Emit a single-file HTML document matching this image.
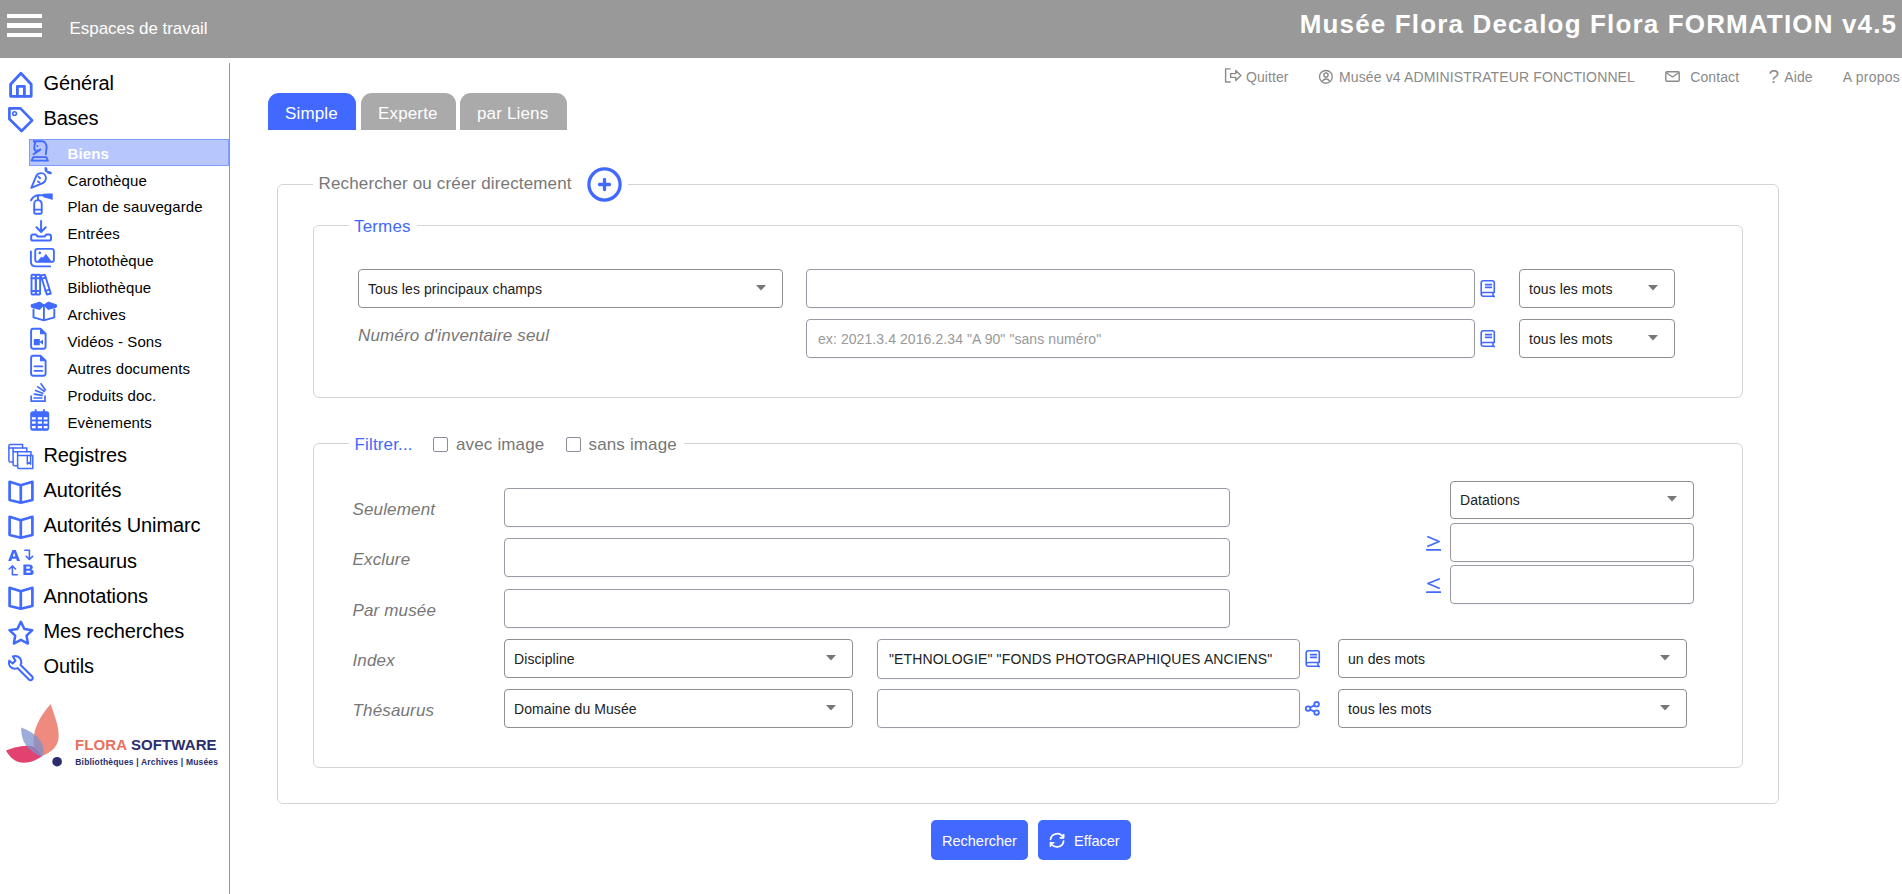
<!DOCTYPE html>
<html><head><meta charset="utf-8"><style>
html,body{margin:0;padding:0;width:1902px;height:894px;overflow:hidden;background:#fff;font-family:"Liberation Sans", sans-serif;}
.t{position:absolute;white-space:nowrap;}
</style></head><body>
<div style="position:absolute;left:0px;top:0px;width:1902px;height:58px;background:#999999;"></div><div style="position:absolute;left:7px;top:13.5px;width:35px;height:4.5px;background:#fff;"></div><div style="position:absolute;left:7px;top:23px;width:35px;height:4.5px;background:#fff;"></div><div style="position:absolute;left:7px;top:32.7px;width:35px;height:4.5px;background:#fff;"></div><div class="t" style="left:69.5px;top:20.00px;font-size:17px;line-height:17px;color:#fff;font-weight:normal;font-style:normal;letter-spacing:-0.05px;">Espaces de travail</div><div class="t" style="right:4.85px;top:10.60px;font-size:26px;line-height:26px;color:#fff;font-weight:bold;font-style:normal;white-space:nowrap;letter-spacing:1.15px;">Musée Flora Decalog Flora FORMATION v4.5</div><div style="position:absolute;left:229px;top:63px;width:1px;height:831px;background:#999;"></div><div class="t" style="left:43.5px;top:73.00px;font-size:20px;line-height:20px;color:#000;font-weight:normal;font-style:normal;letter-spacing:-0.12px;">Général</div><div class="t" style="left:43.5px;top:108.00px;font-size:20px;line-height:20px;color:#000;font-weight:normal;font-style:normal;letter-spacing:-0.12px;">Bases</div><div class="t" style="left:43.5px;top:445.00px;font-size:20px;line-height:20px;color:#000;font-weight:normal;font-style:normal;letter-spacing:-0.12px;">Registres</div><div class="t" style="left:43.5px;top:480.00px;font-size:20px;line-height:20px;color:#000;font-weight:normal;font-style:normal;letter-spacing:-0.12px;">Autorités</div><div class="t" style="left:43.5px;top:515.00px;font-size:20px;line-height:20px;color:#000;font-weight:normal;font-style:normal;letter-spacing:-0.12px;">Autorités Unimarc</div><div class="t" style="left:43.5px;top:551.00px;font-size:20px;line-height:20px;color:#000;font-weight:normal;font-style:normal;letter-spacing:-0.12px;">Thesaurus</div><div class="t" style="left:43.5px;top:586.00px;font-size:20px;line-height:20px;color:#000;font-weight:normal;font-style:normal;letter-spacing:-0.12px;">Annotations</div><div class="t" style="left:43.5px;top:621.00px;font-size:20px;line-height:20px;color:#000;font-weight:normal;font-style:normal;letter-spacing:-0.12px;">Mes recherches</div><div class="t" style="left:43.5px;top:655.50px;font-size:20px;line-height:20px;color:#000;font-weight:normal;font-style:normal;letter-spacing:-0.12px;">Outils</div><div style="position:absolute;left:29px;top:139px;width:200px;height:27px;background:#b7c7fd;box-sizing:border-box;border:1px solid #7f9cff;"></div><div class="t" style="left:67.5px;top:145.60px;font-size:15px;line-height:15px;color:#fff;font-weight:bold;font-style:normal;letter-spacing:0.1px;">Biens</div><div class="t" style="left:67.5px;top:172.51px;font-size:15px;line-height:15px;color:#000;font-weight:normal;font-style:normal;letter-spacing:0.1px;">Carothèque</div><div class="t" style="left:67.5px;top:199.42px;font-size:15px;line-height:15px;color:#000;font-weight:normal;font-style:normal;letter-spacing:0.1px;">Plan de sauvegarde</div><div class="t" style="left:67.5px;top:226.33px;font-size:15px;line-height:15px;color:#000;font-weight:normal;font-style:normal;letter-spacing:0.1px;">Entrées</div><div class="t" style="left:67.5px;top:253.24px;font-size:15px;line-height:15px;color:#000;font-weight:normal;font-style:normal;letter-spacing:0.1px;">Photothèque</div><div class="t" style="left:67.5px;top:280.15px;font-size:15px;line-height:15px;color:#000;font-weight:normal;font-style:normal;letter-spacing:0.1px;">Bibliothèque</div><div class="t" style="left:67.5px;top:307.06px;font-size:15px;line-height:15px;color:#000;font-weight:normal;font-style:normal;letter-spacing:0.1px;">Archives</div><div class="t" style="left:67.5px;top:333.97px;font-size:15px;line-height:15px;color:#000;font-weight:normal;font-style:normal;letter-spacing:0.1px;">Vidéos - Sons</div><div class="t" style="left:67.5px;top:360.88px;font-size:15px;line-height:15px;color:#000;font-weight:normal;font-style:normal;letter-spacing:0.1px;">Autres documents</div><div class="t" style="left:67.5px;top:387.79px;font-size:15px;line-height:15px;color:#000;font-weight:normal;font-style:normal;letter-spacing:0.1px;">Produits doc.</div><div class="t" style="left:67.5px;top:414.70px;font-size:15px;line-height:15px;color:#000;font-weight:normal;font-style:normal;letter-spacing:0.1px;">Evènements</div><div class="t" style="left:1246px;top:70.00px;font-size:14px;line-height:14px;color:#8a8a8a;font-weight:normal;font-style:normal;letter-spacing:0.08px;">Quitter</div><div class="t" style="left:1339px;top:70.00px;font-size:14px;line-height:14px;color:#8a8a8a;font-weight:normal;font-style:normal;letter-spacing:0.13px;">Musée v4 ADMINISTRATEUR FONCTIONNEL</div><div class="t" style="left:1690.3px;top:70.00px;font-size:14px;line-height:14px;color:#8a8a8a;font-weight:normal;font-style:normal;letter-spacing:0.08px;">Contact</div><div class="t" style="left:1768.5px;top:66.70px;font-size:19px;line-height:19px;color:#8a8a8a;font-weight:normal;font-style:normal;">?</div><div class="t" style="left:1784.3px;top:70.00px;font-size:14px;line-height:14px;color:#8a8a8a;font-weight:normal;font-style:normal;letter-spacing:0.08px;">Aide</div><div class="t" style="left:1842.8px;top:70.00px;font-size:14px;line-height:14px;color:#8a8a8a;font-weight:normal;font-style:normal;letter-spacing:0.25px;">A propos</div><div style="position:absolute;left:268px;top:93px;width:88px;height:37px;background:#4169ff;border-radius:11px 11px 0 0;"></div><div class="t" style="left:285px;top:105.20px;font-size:17px;line-height:17px;color:#fff;font-weight:normal;font-style:normal;letter-spacing:0.15px;">Simple</div><div style="position:absolute;left:361px;top:93px;width:95px;height:37px;background:#aaaaaa;border-radius:11px 11px 0 0;"></div><div class="t" style="left:378px;top:105.20px;font-size:17px;line-height:17px;color:#fff;font-weight:normal;font-style:normal;letter-spacing:0.15px;">Experte</div><div style="position:absolute;left:460px;top:93px;width:107px;height:37px;background:#aaaaaa;border-radius:11px 11px 0 0;"></div><div class="t" style="left:477px;top:105.20px;font-size:17px;line-height:17px;color:#fff;font-weight:normal;font-style:normal;letter-spacing:0.15px;">par Liens</div><div style="position:absolute;left:277px;top:184px;width:1502px;height:620px;box-sizing:border-box;border:1px solid #d4d4d4;border-radius:6px;"></div><div style="position:absolute;left:313px;top:183px;width:315px;height:3px;background:#fff;"></div><div style="position:absolute;left:313px;top:225px;width:1430px;height:173px;box-sizing:border-box;border:1px solid #d4d4d4;border-radius:6px;"></div><div style="position:absolute;left:349px;top:224px;width:68px;height:3px;background:#fff;"></div><div style="position:absolute;left:313px;top:443px;width:1430px;height:325px;box-sizing:border-box;border:1px solid #d4d4d4;border-radius:6px;"></div><div style="position:absolute;left:349px;top:442px;width:335px;height:3px;background:#fff;"></div><div class="t" style="left:318.5px;top:175.20px;font-size:17px;line-height:17px;color:#777;font-weight:normal;font-style:normal;letter-spacing:0.15px;">Rechercher ou créer directement</div><svg style="position:absolute;left:586px;top:166px;" width="37" height="37" viewBox="0 0 37 37"><circle cx="18.5" cy="18.5" r="15.6" fill="none" stroke="#4169ff" stroke-width="3.3"/><path d="M18.5 13.5v10M13.5 18.5h10" stroke="#4169ff" stroke-width="3.3" stroke-linecap="round"/></svg><div class="t" style="left:354px;top:218.00px;font-size:17px;line-height:17px;color:#4169ff;font-weight:normal;font-style:normal;letter-spacing:0.15px;">Termes</div><div class="t" style="left:354.5px;top:435.60px;font-size:17px;line-height:17px;color:#4169ff;font-weight:normal;font-style:normal;letter-spacing:0.15px;">Filtrer...</div><div style="position:absolute;left:433px;top:437px;width:15px;height:15px;box-sizing:border-box;border:1px solid #8c8c9a;border-radius:2px;background:#fff;"></div><div class="t" style="left:456px;top:435.60px;font-size:17px;line-height:17px;color:#777;font-weight:normal;font-style:normal;letter-spacing:0.15px;">avec image</div><div style="position:absolute;left:566px;top:437px;width:15px;height:15px;box-sizing:border-box;border:1px solid #8c8c9a;border-radius:2px;background:#fff;"></div><div class="t" style="left:588.5px;top:435.60px;font-size:17px;line-height:17px;color:#777;font-weight:normal;font-style:normal;letter-spacing:0.15px;">sans image</div><div style="position:absolute;left:358px;top:269px;width:425px;height:38.5px;box-sizing:border-box;border:1px solid #8f8f8f;border-radius:4px;background:#fff;"></div><div class="t" style="left:368px;top:281.55px;font-size:14px;line-height:14px;color:#222;font-weight:normal;font-style:normal;letter-spacing:0.08px;">Tous les principaux champs</div><svg style="position:absolute;left:756px;top:284.75px;" width="10" height="6" viewBox="0 0 10 6"><path d="M0 0h10L5 5.5z" fill="#777"/></svg><div style="position:absolute;left:806px;top:269px;width:669px;height:38.5px;box-sizing:border-box;border:1px solid #9a9aa6;border-radius:4px;background:#fff;box-shadow:0 1px 2px rgba(0,0,0,0.04);"></div><div style="position:absolute;left:806px;top:319px;width:669px;height:38.5px;box-sizing:border-box;border:1px solid #9a9aa6;border-radius:4px;background:#fff;box-shadow:0 1px 2px rgba(0,0,0,0.04);"></div><div class="t" style="left:818px;top:331.55px;font-size:14px;line-height:14px;color:#999;font-weight:normal;font-style:normal;letter-spacing:0.08px;">ex: 2021.3.4 2016.2.34 "A 90" "sans numéro"</div><div style="position:absolute;left:1519px;top:269px;width:156px;height:38.5px;box-sizing:border-box;border:1px solid #8f8f8f;border-radius:4px;background:#fff;"></div><div class="t" style="left:1529px;top:281.55px;font-size:14px;line-height:14px;color:#222;font-weight:normal;font-style:normal;letter-spacing:0.08px;">tous les mots</div><svg style="position:absolute;left:1648px;top:284.75px;" width="10" height="6" viewBox="0 0 10 6"><path d="M0 0h10L5 5.5z" fill="#777"/></svg><div style="position:absolute;left:1519px;top:319px;width:156px;height:38.5px;box-sizing:border-box;border:1px solid #8f8f8f;border-radius:4px;background:#fff;"></div><div class="t" style="left:1529px;top:331.55px;font-size:14px;line-height:14px;color:#222;font-weight:normal;font-style:normal;letter-spacing:0.08px;">tous les mots</div><svg style="position:absolute;left:1648px;top:334.75px;" width="10" height="6" viewBox="0 0 10 6"><path d="M0 0h10L5 5.5z" fill="#777"/></svg><div class="t" style="left:358px;top:326.80px;font-size:17px;line-height:17px;color:#777;font-weight:normal;font-style:italic;letter-spacing:0.15px;">Numéro d'inventaire seul</div><div class="t" style="left:352.5px;top:500.90px;font-size:17px;line-height:17px;color:#777;font-weight:normal;font-style:italic;letter-spacing:0.15px;">Seulement</div><div class="t" style="left:352.5px;top:551.00px;font-size:17px;line-height:17px;color:#777;font-weight:normal;font-style:italic;letter-spacing:0.15px;">Exclure</div><div class="t" style="left:352.5px;top:602.20px;font-size:17px;line-height:17px;color:#777;font-weight:normal;font-style:italic;letter-spacing:0.15px;">Par musée</div><div class="t" style="left:352.5px;top:651.80px;font-size:17px;line-height:17px;color:#777;font-weight:normal;font-style:italic;letter-spacing:0.15px;">Index</div><div class="t" style="left:352.5px;top:702.20px;font-size:17px;line-height:17px;color:#777;font-weight:normal;font-style:italic;letter-spacing:0.15px;">Thésaurus</div><div style="position:absolute;left:504px;top:488px;width:726px;height:38.5px;box-sizing:border-box;border:1px solid #9a9aa6;border-radius:4px;background:#fff;box-shadow:0 1px 2px rgba(0,0,0,0.04);"></div><div style="position:absolute;left:504px;top:538px;width:726px;height:38.5px;box-sizing:border-box;border:1px solid #9a9aa6;border-radius:4px;background:#fff;box-shadow:0 1px 2px rgba(0,0,0,0.04);"></div><div style="position:absolute;left:504px;top:589px;width:726px;height:38.5px;box-sizing:border-box;border:1px solid #9a9aa6;border-radius:4px;background:#fff;box-shadow:0 1px 2px rgba(0,0,0,0.04);"></div><div style="position:absolute;left:504px;top:639px;width:349px;height:38.5px;box-sizing:border-box;border:1px solid #8f8f8f;border-radius:4px;background:#fff;"></div><div class="t" style="left:514px;top:651.55px;font-size:14px;line-height:14px;color:#222;font-weight:normal;font-style:normal;letter-spacing:0.08px;">Discipline</div><svg style="position:absolute;left:826px;top:654.75px;" width="10" height="6" viewBox="0 0 10 6"><path d="M0 0h10L5 5.5z" fill="#777"/></svg><div style="position:absolute;left:504px;top:689px;width:349px;height:38.5px;box-sizing:border-box;border:1px solid #8f8f8f;border-radius:4px;background:#fff;"></div><div class="t" style="left:514px;top:701.55px;font-size:14px;line-height:14px;color:#222;font-weight:normal;font-style:normal;letter-spacing:0.08px;">Domaine du Musée</div><svg style="position:absolute;left:826px;top:704.75px;" width="10" height="6" viewBox="0 0 10 6"><path d="M0 0h10L5 5.5z" fill="#777"/></svg><div style="position:absolute;left:877px;top:639px;width:423px;height:39.5px;box-sizing:border-box;border:1px solid #9a9aa6;border-radius:4px;background:#fff;box-shadow:0 1px 2px rgba(0,0,0,0.04);"></div><div class="t" style="left:889px;top:652.05px;font-size:14px;line-height:14px;color:#222;font-weight:normal;font-style:normal;letter-spacing:0.15px;">"ETHNOLOGIE" "FONDS PHOTOGRAPHIQUES ANCIENS"</div><div style="position:absolute;left:877px;top:689px;width:423px;height:39px;box-sizing:border-box;border:1px solid #9a9aa6;border-radius:4px;background:#fff;box-shadow:0 1px 2px rgba(0,0,0,0.04);"></div><div style="position:absolute;left:1338px;top:639px;width:349px;height:38.5px;box-sizing:border-box;border:1px solid #8f8f8f;border-radius:4px;background:#fff;"></div><div class="t" style="left:1348px;top:651.55px;font-size:14px;line-height:14px;color:#222;font-weight:normal;font-style:normal;letter-spacing:0.08px;">un des mots</div><svg style="position:absolute;left:1660px;top:654.75px;" width="10" height="6" viewBox="0 0 10 6"><path d="M0 0h10L5 5.5z" fill="#777"/></svg><div style="position:absolute;left:1338px;top:689px;width:349px;height:38.5px;box-sizing:border-box;border:1px solid #8f8f8f;border-radius:4px;background:#fff;"></div><div class="t" style="left:1348px;top:701.55px;font-size:14px;line-height:14px;color:#222;font-weight:normal;font-style:normal;letter-spacing:0.08px;">tous les mots</div><svg style="position:absolute;left:1660px;top:704.75px;" width="10" height="6" viewBox="0 0 10 6"><path d="M0 0h10L5 5.5z" fill="#777"/></svg><div style="position:absolute;left:1450px;top:481px;width:244px;height:37.5px;box-sizing:border-box;border:1px solid #8f8f8f;border-radius:4px;background:#fff;"></div><div class="t" style="left:1460px;top:493.05px;font-size:14px;line-height:14px;color:#222;font-weight:normal;font-style:normal;letter-spacing:0.08px;">Datations</div><svg style="position:absolute;left:1667px;top:496.25px;" width="10" height="6" viewBox="0 0 10 6"><path d="M0 0h10L5 5.5z" fill="#777"/></svg><div style="position:absolute;left:1450px;top:523px;width:244px;height:38.5px;box-sizing:border-box;border:1px solid #9a9aa6;border-radius:4px;background:#fff;box-shadow:0 1px 2px rgba(0,0,0,0.04);"></div><div style="position:absolute;left:1450px;top:564.5px;width:244px;height:39px;box-sizing:border-box;border:1px solid #9a9aa6;border-radius:4px;background:#fff;box-shadow:0 1px 2px rgba(0,0,0,0.04);"></div><svg style="position:absolute;left:1418px;top:528px;" width="32" height="72" viewBox="1418 528 32 72"><g fill="none" stroke="#4169ff" stroke-width="1.6" stroke-linejoin="round"><path d="M1427.3 536.5L1439.2 541.4L1427.3 546.4M1426.1 549.9H1441M1439.8 578.8L1427.9 583.6L1439.8 588.4M1426.1 592.1H1441"/></g></svg><svg style="position:absolute;left:1480px;top:280px;" width="17" height="18" viewBox="0 0 17 18"><g fill="none" stroke="#4169ff" stroke-width="1.6" stroke-linejoin="round"><path d="M1.2 14.2V2.8A2 2 0 0 1 3.2 0.8H12.5A1.8 1.8 0 0 1 14.3 2.6V12.5H3.2A2 2 0 0 0 1.2 14.3A1.9 1.9 0 0 0 3.1 16.2H14.6"/><path d="M13 12.5V16.2L14.8 16.6"/><path d="M4.9 4.6H12M4.9 7.4H12"/></g></svg><svg style="position:absolute;left:1480px;top:330px;" width="17" height="18" viewBox="0 0 17 18"><g fill="none" stroke="#4169ff" stroke-width="1.6" stroke-linejoin="round"><path d="M1.2 14.2V2.8A2 2 0 0 1 3.2 0.8H12.5A1.8 1.8 0 0 1 14.3 2.6V12.5H3.2A2 2 0 0 0 1.2 14.3A1.9 1.9 0 0 0 3.1 16.2H14.6"/><path d="M13 12.5V16.2L14.8 16.6"/><path d="M4.9 4.6H12M4.9 7.4H12"/></g></svg><svg style="position:absolute;left:1305px;top:650px;" width="17" height="18" viewBox="0 0 17 18"><g fill="none" stroke="#4169ff" stroke-width="1.6" stroke-linejoin="round"><path d="M1.2 14.2V2.8A2 2 0 0 1 3.2 0.8H12.5A1.8 1.8 0 0 1 14.3 2.6V12.5H3.2A2 2 0 0 0 1.2 14.3A1.9 1.9 0 0 0 3.1 16.2H14.6"/><path d="M13 12.5V16.2L14.8 16.6"/><path d="M4.9 4.6H12M4.9 7.4H12"/></g></svg><svg style="position:absolute;left:1304px;top:700px;" width="17" height="17" viewBox="0 0 17 17"><g fill="none" stroke="#4169ff" stroke-width="1.8"><circle cx="4.05" cy="8.6" r="2.3"/><circle cx="12.6" cy="4.3" r="2.3"/><circle cx="12.6" cy="12.6" r="2.3"/><path d="M6.1 7.5l4.4-2.1M6.1 9.7l4.4 1.9"/></g></svg><div style="position:absolute;left:931px;top:820px;width:97px;height:40px;background:#4169ff;border-radius:5px;"></div><div class="t" style="left:942px;top:833.75px;font-size:14.5px;line-height:14.5px;color:#fff;font-weight:normal;font-style:normal;">Rechercher</div><div style="position:absolute;left:1038px;top:820px;width:93px;height:40px;background:#4169ff;border-radius:5px;"></div><div class="t" style="left:1074px;top:833.75px;font-size:14.5px;line-height:14.5px;color:#fff;font-weight:normal;font-style:normal;">Effacer</div><svg style="position:absolute;left:1040px;top:825px;" width="30" height="30" viewBox="1040 825 30 30"><g transform="translate(1047.2 830.45) scale(0.82)" fill="none" stroke="#fff" stroke-width="2.1" stroke-linecap="round" stroke-linejoin="round"><path d="M4 11a8.1 8.1 0 0 1 15.5 -2m.5 -4v4h-4"/><path d="M20 13a8.1 8.1 0 0 1 -15.5 2m-.5 4v-4h4"/></g></svg><svg style="position:absolute;left:0;top:0" width="1902" height="894" viewBox="0 0 1902 894"><g fill="none" stroke="#416aff" stroke-width="2.8" stroke-linejoin="round" stroke-linecap="round"><path d="M10.6 96.3V84.2L20.9 73.3L31.2 84.2V96.3Z"/><path d="M17.4 96.3V86.3H24.4V96.3"/></g><g fill="none" stroke="#416aff" stroke-width="2.7" stroke-linejoin="round"><path d="M9.4 108.4H20.4L32.1 120.4L21.6 131L9.4 119Z"/></g><circle cx="14.6" cy="113.6" r="1.9" fill="none" stroke="#416aff" stroke-width="1.6"/><g fill="none" stroke="#416aff" stroke-width="1.9" stroke-linejoin="round" stroke-linecap="round"><path d="M33.3 157.1H46.3L47.9 160.6H31.6Z"/><path d="M33.8 141.2H41.5C44.8 141.2 46.6 144 46.6 147.5L45.8 154.2"/><path d="M33.8 141.2L35.2 143.3C34.3 144.6 34.1 146.5 34.3 148.5C34.5 150.3 35.4 151.2 36.7 150.9L40.4 149.6L33.6 154.2"/></g><circle cx="37.4" cy="146.1" r="1" fill="#416aff"/><g fill="none" stroke="#416aff" stroke-width="1.9" stroke-linejoin="round" stroke-linecap="round"><path d="M31.3 187.8L36.3 175.9C37.2 174.1 39.2 173.1 41.2 173.1C44 173.1 45.9 175.3 45.9 178C45.9 181 43.6 183 41 183.8Z"/><path d="M38.4 176.6L40.1 178.2M38 181.6L39.4 182.6"/></g><ellipse cx="46" cy="169.6" rx="1.5" ry="2.6" transform="rotate(-12 45.9 169.5)" fill="#416aff"/><ellipse cx="49.2" cy="172.7" rx="2.8" ry="1.5" transform="rotate(12 49.5 172.7)" fill="#416aff"/><g fill="none" stroke="#416aff" stroke-width="1.9" stroke-linejoin="round" stroke-linecap="round"><path d="M34.2 212.5V203.9A3.75 3.75 0 0 1 41.7 203.9V212.5A1.3 1.3 0 0 1 40.4 213.8H35.5A1.3 1.3 0 0 1 34.2 212.5Z"/><path d="M34.2 209.6H41.7M37.95 200.1V195M31 200.3C32.5 197.5 35 195.5 38 195.2H44"/></g><path d="M43.3 194L52.4 193.8V199.4L43.3 196.9Z" fill="#416aff" stroke="#416aff" stroke-width="0.6" stroke-linejoin="round"/><g fill="none" stroke="#416aff" stroke-width="2" stroke-linejoin="round" stroke-linecap="round"><path d="M41.1 221V232M36.5 227.3L41.1 232L45.7 227.3"/><path d="M31.2 236.2C31.2 235 32 234.4 33.2 234.4H35.8L37.6 236.5H44.6L46.4 234.4H49C50.2 234.4 51 235 51 236.2V239C51 240 50.3 240.6 49.3 240.6H32.9C31.9 240.6 31.2 240 31.2 239Z"/></g><g fill="none" stroke="#416aff" stroke-width="1.9" stroke-linejoin="round" stroke-linecap="round"><rect x="35.25" y="248.9" width="18.65" height="13" rx="2.2"/><path d="M30.9 251.5V261.5C30.9 264.6 32.8 266.4 35.8 266.4H50.2"/></g><path d="M37.4 261.2L41.2 256.9L43.1 257.5L45.9 253.8L51.5 261.2Z" fill="#416aff"/><circle cx="39.8" cy="252.9" r="1.3" fill="#416aff"/><g fill="none" stroke="#416aff" stroke-width="1.9" stroke-linejoin="round" stroke-linecap="round"><rect x="31.5" y="274.8" width="4.3" height="19.7" rx="0.8"/><rect x="35.8" y="274.8" width="4.3" height="19.7" rx="0.8"/><path d="M40.8 275.5L44.8 274.6L50.8 293.5L46.8 294.5Z"/><path d="M31.5 278.3H40M31.5 291H40M41.7 278.6L45.7 277.7M45.2 290.8L49.2 289.8"/></g><path d="M31 304.9L39.8 302.1L43.9 304.9L39.8 309.5L31.5 307.2Z M43.9 304.9L48.3 302.1L56.7 304.9L56.3 307.2L48 309.5Z" fill="#416aff" stroke="#416aff" stroke-width="1" stroke-linejoin="round"/><g fill="none" stroke="#416aff" stroke-width="1.9" stroke-linejoin="round" stroke-linecap="round"><path d="M33.5 309.5V317.4L43.9 320.3L54.3 317.4V309.5M43.9 305.5V320"/></g><g fill="none" stroke="#416aff" stroke-width="1.9" stroke-linejoin="round"><path d="M31.1 331C31.1 329.6 32 328.8 33.3 328.8H40.5L45.6 333.7V346.5C45.6 347.9 44.8 348.7 43.4 348.7H33.3C32 348.7 31.1 347.9 31.1 346.5Z"/></g><path d="M40 328.8V334.3H45.6Z" fill="#416aff"/><path d="M33.8 339.1H39.8V345.2H33.8Z M39.5 342.1L43 339.5V344.7Z" fill="#416aff"/><g fill="none" stroke="#416aff" stroke-width="1.9" stroke-linejoin="round" stroke-linecap="round"><path d="M31.1 358C31.1 356.6 32 355.8 33.3 355.8H40.5L45.6 360.7V373.5C45.6 374.9 44.8 375.7 43.4 375.7H33.3C32 375.7 31.1 374.9 31.1 373.5Z"/><path d="M34.5 366.4H42.3M34.5 370.9H42.3"/></g><path d="M40 355.8V361.3H45.6Z" fill="#416aff"/><g fill="none" stroke="#416aff" stroke-width="1.7" stroke-linecap="square"><path d="M31.2 396.3V401.1H45V396.3"/><path d="M34.3 398H41.5M34.6 394.2L42 395.3M35.7 390.6L42.6 393.3M37.8 386.9L44.2 391.3M41.1 384L45.3 389.8"/></g><rect x="30.2" y="411.3" width="19" height="19.4" rx="2.8" fill="#416aff"/><path d="M35.7 409.2V412.5M43.9 409.2V412.5" stroke="#416aff" stroke-width="1.9"/><rect x="31.9" y="417.2" width="3.8" height="2.3" fill="#fff"/><rect x="37.8" y="417.2" width="4.2" height="2.3" fill="#fff"/><rect x="43.7" y="417.2" width="3.8" height="2.3" fill="#fff"/><rect x="31.9" y="421.4" width="3.8" height="2.3" fill="#fff"/><rect x="37.8" y="421.4" width="4.2" height="2.3" fill="#fff"/><rect x="43.7" y="421.4" width="3.8" height="2.3" fill="#fff"/><rect x="31.9" y="426.0" width="3.8" height="2.3" fill="#fff"/><rect x="37.8" y="426.0" width="4.2" height="2.3" fill="#fff"/><rect x="43.7" y="426.0" width="3.8" height="2.3" fill="#fff"/><g fill="none" stroke="#416aff" stroke-width="1.5" stroke-linejoin="round" stroke-linecap="round"><path d="M8.9 447.9V446A1.5 1.5 0 0 1 10.4 444.5H22.6V447.9"/><path d="M8.9 447.9H26.8V451.7M8.9 447.9V460.5A1.5 1.5 0 0 0 10.4 462H13.1"/><path d="M13.1 447.9V464.3A1.5 1.5 0 0 0 14.6 465.8H17.6"/><path d="M13.1 451.7H31V455.4"/><path d="M17.6 451.7V467.1A1.5 1.5 0 0 0 19.1 468.6H32.8V455.4H17.6"/><path d="M27.3 455.4V464.1L28.95 462.5L30.6 464.1V455.4"/></g><g fill="none" stroke="#416aff" stroke-width="2.7" stroke-linejoin="round"><path d="M9.6 481.8L20.8 485.3L32.4 481.8V500.0L20.8 502.7L9.6 500.0Z"/><path d="M20.8 485.3V502.3"/></g><g fill="none" stroke="#416aff" stroke-width="2.7" stroke-linejoin="round"><path d="M9.6 516.8L20.8 520.3L32.4 516.8V535.0L20.8 537.6999999999999L9.6 535.0Z"/><path d="M20.8 520.3V537.3"/></g><g fill="none" stroke="#416aff" stroke-width="2.7" stroke-linejoin="round"><path d="M9.6 587.8L20.8 591.3L32.4 587.8V606.0L20.8 608.6999999999999L9.6 606.0Z"/><path d="M20.8 591.3V608.3"/></g><path fill-rule="evenodd" fill="#416aff" d="M8.2 561L12.4 550H15.8L20 561H16.9L16.2 558.8H12L11.3 561Z M12.8 556.4H15.4L14.1 552.4Z"/><path fill-rule="evenodd" fill="#416aff" d="M23.4 564.4H29C31.5 564.4 32.8 565.6 32.8 567.3C32.8 568.5 32.2 569.3 31.2 569.6C32.8 570 33.7 571.1 33.7 572.4C33.7 574 32.4 575 30 575H23.4Z M26.3 566.6V568.7H28.7C29.5 568.7 29.9 568.3 29.9 567.65C29.9 567 29.5 566.6 28.7 566.6Z M26.3 570.8V572.8H29.2C30.1 572.8 30.6 572.4 30.6 571.8C30.6 571.2 30.1 570.8 29.2 570.8Z"/><g fill="none" stroke="#416aff" stroke-width="1.6" stroke-linecap="round" stroke-linejoin="round"><path d="M24.8 550.3H29.4V559"/><path d="M26.2 556.3L29.4 559.3L32.6 556.3"/><path d="M17.3 574.7H12.4V566"/><path d="M9.2 569L12.4 566L15.6 569"/></g><path transform="translate(7.2 619.6) scale(1.14)" d="M12 17.75l-6.172 3.245l1.179 -6.873l-5 -4.867l6.9 -1l3.086 -6.253l3.086 6.253l6.9 1l-5 4.867l1.179 6.873z" fill="none" stroke="#416aff" stroke-width="2.2" stroke-linejoin="round"/><path transform="translate(0.7 0)" d="M12.2 656.4C15.5 655.2 19.2 656.8 20.3 660.2C20.8 661.9 20.6 663.5 19.9 664.9L31.4 676.4C32.3 677.3 32.3 678.7 31.4 679.6C30.5 680.5 29.1 680.5 28.2 679.6L16.8 668.1C15.3 668.8 13.6 668.9 12 668.3C8.8 667.1 7.6 663.7 8.6 660.7L11.9 663.4L14.7 660.7Z" fill="none" stroke="#416aff" stroke-width="2.1" stroke-linejoin="round"/><path d="M50.5 704C54 714 59.5 727 58.6 738C57.8 748 49 754.5 37.5 757C32.5 748 32.5 736 36.5 726C40 717 46 709.5 50.5 704Z" fill="#ee8a7e"/><path d="M6 750.6C13 747.5 22 745 29.5 745.8C35.5 746.5 39.5 751.5 41.6 756.6C35 761.5 26 764 18.5 762C13 760.5 9 756 6 750.6Z" fill="#e2426f"/><path d="M21.2 727.6C29.5 730.5 39 736 42.5 745C44.5 750 43.8 754 42.3 756.8C33 753.5 25.5 747 22.8 739C21.5 735 21.1 731 21.2 727.6Z" fill="#7a90cc" fill-opacity="0.74"/><circle cx="57.1" cy="761.7" r="4.8" fill="#2b2e6e"/><g fill="none" stroke="#8a8a8a" stroke-width="1.4" stroke-linejoin="round"><path d="M1230.7 68.9H1225.6V82H1230.7"/><path d="M1230.6 73.6H1235.8V70.4L1240.9 75.5L1235.8 80.6V77.4H1230.6Z"/><circle cx="1325.9" cy="76.85" r="6.4"/><circle cx="1326" cy="75.1" r="2.1"/><path d="M1322.3 81.6C1323 79.8 1324.4 79 1326 79C1327.6 79 1329 79.8 1329.7 81.6"/><rect x="1665.8" y="71.8" width="13.4" height="9.4" rx="1"/><path d="M1666 72.5L1672.5 77L1679 72.5"/></g></svg><div class="t" style="left:75px;top:737.00px;font-size:15px;line-height:15px;color:#2b2e6e;font-weight:bold;font-style:normal;letter-spacing:0.1px;"><span style="color:#e8705f">FLORA</span> SOFTWARE</div><div class="t" style="left:75.3px;top:757.75px;font-size:8.5px;line-height:8.5px;color:#2b2e6e;font-weight:bold;font-style:normal;letter-spacing:0.17px;">Bibliothèques | Archives | Musées</div>
</body></html>
